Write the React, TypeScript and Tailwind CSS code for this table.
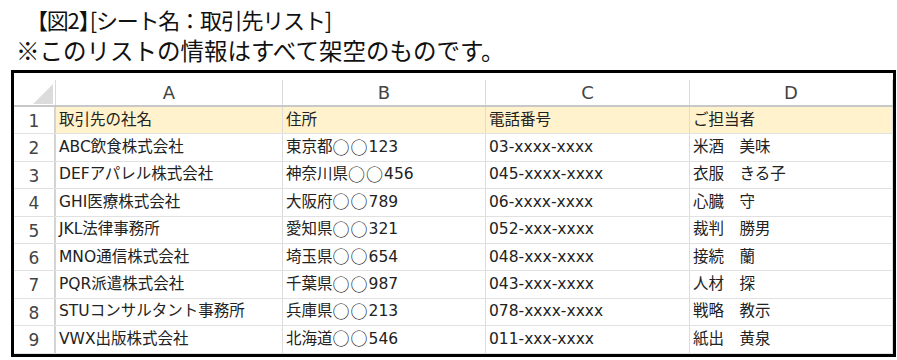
import React from 'react';

const COLUMNS = ["A", "B", "C", "D"]
const WIDTHS = ["w-[227px]", "w-[203px]", "w-[204px]", "flex-1"]

const ROWS = [
    ["取引先の社名", "住所", "電話番号", "ご担当者"],
    ["ABC飲食株式会社", "東京都○○123", "03-xxxx-xxxx", "米酒　美味"],
    ["DEFアパレル株式会社", "神奈川県○○456", "045-xxxx-xxxx", "衣服　きる子"],
    ["GHI医療株式会社", "大阪府○○789", "06-xxxx-xxxx", "心臓　守"],
    ["JKL法律事務所", "愛知県○○321", "052-xxx-xxxx", "裁判　勝男"],
    ["MNO通信株式会社", "埼玉県○○654", "048-xxx-xxxx", "接続　蘭"],
    ["PQR派遣株式会社", "千葉県○○987", "043-xxx-xxxx", "人材　探"],
    ["STUコンサルタント事務所", "兵庫県○○213", "078-xxxx-xxxx", "戦略　教示"],
    ["VWX出版株式会社", "北海道○○546", "011-xxx-xxxx", "紙出　黄泉"],
]

// ○ is drawn bigger than the font gives it, like in the sheet
const CellText = ({text}: {text: string}) => (
    <>
        {text.split(/(○+)/).map((part, i) =>
            part.startsWith("○")
                ? <span key={i} className="font-['Noto_Sans_CJK_JP',sans-serif] text-[17px] leading-none tracking-[1px] relative -top-[1.5px]">{part}</span>
                : <React.Fragment key={i}>{part}</React.Fragment>
        )}
    </>
)

const App = () => {
    return (
        <div className="w-[897px] h-[360px] bg-white overflow-hidden font-['Noto_Sans_CJK_JP',sans-serif] text-[#111]">
            <div className="pl-[16px] pt-[4px] leading-[31px]">
                <div className="ml-[10px] text-[22px] tracking-[-1.2px]">
                    【図2<span className="tracking-[-11px]">】</span>[シート名：取引先リスト]
                </div>
                <div className="text-[23.5px]">※このリストの情報はすべて架空のものです。</div>
            </div>
            <div className="ml-[11px] mt-[4px] w-[885px] h-[287px] border-[3px] border-black overflow-hidden">
                <div className="h-[7px]"/>
                {/* column header */}
                <div className="flex h-[27px] border-b-2 border-[#c8c8c8] text-[18px] text-[#444] font-['DejaVu_Sans','Noto_Sans_CJK_JP',sans-serif]">
                    <div className="w-[42px] flex items-end justify-end border-r border-[#dadada] pr-[2px] pb-[1px]">
                        <svg width="20" height="20" viewBox="0 0 20 20">
                            <polygon points="20,0 20,20 0,20" fill="#dcdcdc"/>
                        </svg>
                    </div>
                    {COLUMNS.map((c, i) => (
                        <div key={c} className={`${WIDTHS[i]} flex items-center justify-center border-r border-[#dadada]`}>
                            {c}
                        </div>
                    ))}
                </div>
                {ROWS.map((row, r) => (
                    <div key={r} className={`flex h-[27.4px] border-b border-[#e1e1e1] ${r === 0 ? "bg-[#fff2cc]" : ""}`}>
                        <div className="w-[42px] flex items-center justify-center bg-white border-r-2 border-[#d4d4d4] text-[17px] text-[#444] pt-[3px] font-['DejaVu_Sans',sans-serif]">
                            {r + 1}
                        </div>
                        {row.map((cell, i) => (
                            <div key={i} className={`${WIDTHS[i]} flex items-center pl-[3px] text-[15.5px] text-[#222] whitespace-nowrap border-r border-[#dcdcdc] font-['DejaVu_Sans','Noto_Sans_CJK_JP',sans-serif]`}>
                                <CellText text={cell}/>
                            </div>
                        ))}
                    </div>
                ))}
            </div>
        </div>
    );
};

export default App;
